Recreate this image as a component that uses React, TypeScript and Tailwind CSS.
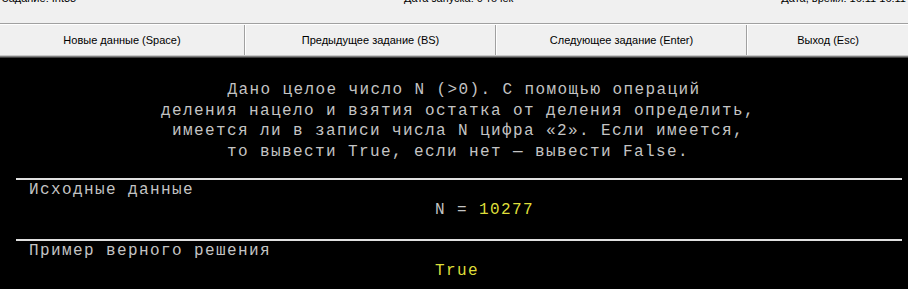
import React from "react";

const mono = { fontFamily: '"Liberation Mono", "Courier New", monospace' };

const buttons = [
  { label: "Новые данные (Space)", w: "w-[245px]" },
  { label: "Предыдущее задание (BS)", w: "w-[251px]" },
  { label: "Следующее задание (Enter)", w: "w-[251px]" },
  { label: "Выход (Esc)", w: "flex-1" },
];

export default function App() {
  return (
    <div className="w-[908px] h-[289px] overflow-hidden bg-black">
      {/* status + toolbar */}
      <div className="bg-[#f0f0f0] font-['Liberation_Sans',Arial,sans-serif] text-[11px] text-black">
        <div className="h-[23px] relative">
          <div className="absolute -top-[10px] left-0 right-0 flex justify-between px-[2px]">
            <span>Задание: Int38</span>
            <span className="ml-[60px]">Дата запуска: 0 точек</span>
            <span>Дата, время: 16.11 16:11</span>
          </div>
        </div>
        <div className="h-px bg-[#a0a0a0]" />
        <div className="h-px bg-white" />
        <div className="flex h-[30px]">
          {buttons.map((b, i) => (
            <div
              key={b.label}
              className={`${b.w} flex items-center justify-center ${
                i > 0 ? "border-l border-l-white" : ""
              } ${i < buttons.length - 1 ? "border-r border-r-[#a0a0a0]" : ""}`}
            >
              {b.label}
            </div>
          ))}
        </div>
        <div className="h-px bg-[#c8c8c8]" />
        <div className="h-px bg-[#808080]" />
        <div className="h-px bg-[#404040]" />
      </div>

      {/* task text */}
      <div style={mono} className="text-[16px] tracking-[1.4px] text-[#c4c4c4]">
        <div className="pt-[22px] pl-[8px] text-center leading-[20.7px]">
          <div className="pl-[12px]">Дано целое число N (&gt;0). С помощью операций</div>
          <div>деления нацело и взятия остатка от деления определить,</div>
          <div>имеется ли в записи числа N цифра «2». Если имеется,</div>
          <div>то вывести True, если нет — вывести False.</div>
        </div>

        <div className="mt-[15px] mx-[16px] mr-[6px] h-[2px] bg-[#e0e0e0]" />
        <div className="pl-[29px] leading-[20px]">Исходные данные</div>
        <div className="pl-[435px] leading-[20px]">
          N = <span className="text-[#dede3a]">10277</span>
        </div>

        <div className="mt-[19px] mx-[16px] mr-[6px] h-[2px] bg-[#e0e0e0]" />
        <div className="pl-[29px] leading-[20px]">Пример верного решения</div>
        <div className="pl-[435px] leading-[20px] text-[#dede3a]">True</div>
      </div>
    </div>
  );
}
